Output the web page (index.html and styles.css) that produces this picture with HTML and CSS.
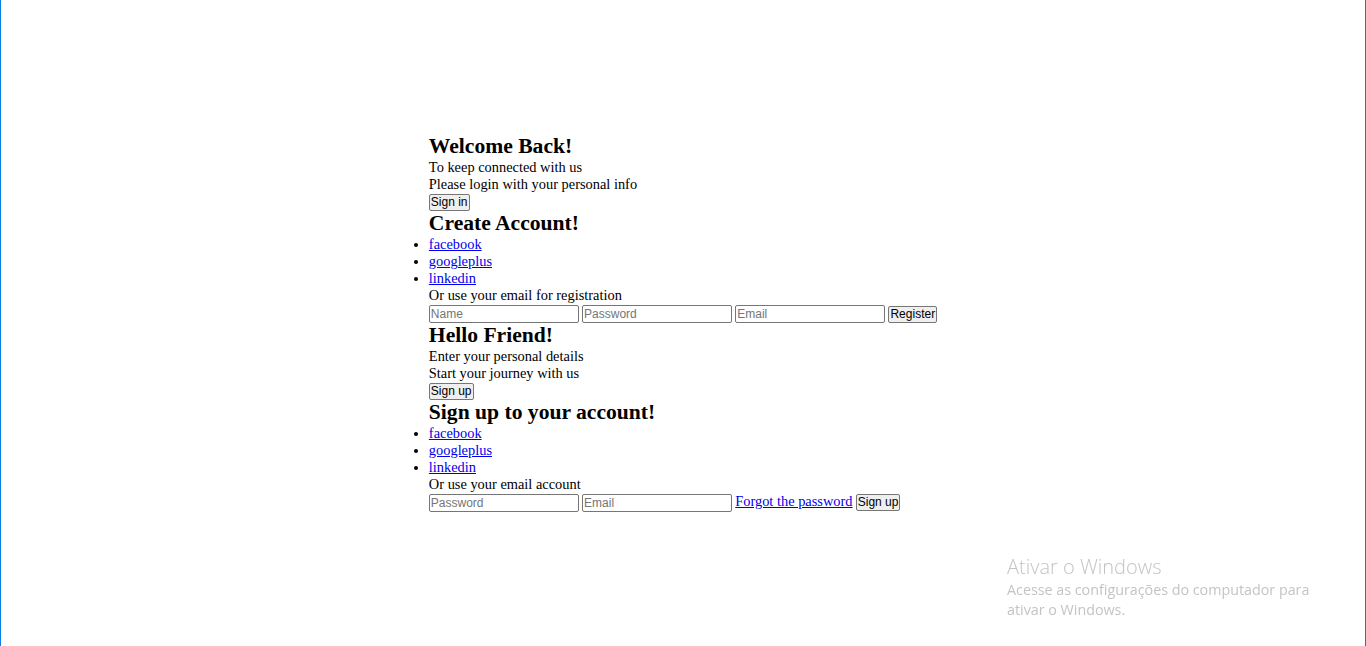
FILE: index.html
```html
<!DOCTYPE html>
<html lang="pt">
<head>
<meta charset="utf-8">
<title>Login</title>
<link rel="stylesheet" href="styles.css">
</head>
<body>
<div class="container">
  <div class="panel">
    <h2>Welcome Back!</h2>
    <p>To keep connected with us</p>
    <p>Please login with your personal info</p>
    <button>Sign in</button>
  </div>
  <div class="panel">
    <h2>Create Account!</h2>
    <ul>
      <li><a href="#">facebook</a></li>
      <li><a href="#">googleplus</a></li>
      <li><a href="#">linkedin</a></li>
    </ul>
    <p>Or use your email for registration</p>
    <form class="row">
      <input type="text" placeholder="Name">
      <input type="password" placeholder="Password">
      <input type="email" placeholder="Email">
      <button>Register</button>
    </form>
  </div>
  <div class="panel">
    <h2>Hello Friend!</h2>
    <p>Enter your personal details</p>
    <p>Start your journey with us</p>
    <button>Sign up</button>
  </div>
  <div class="panel">
    <h2>Sign up to your account!</h2>
    <ul>
      <li><a href="#">facebook</a></li>
      <li><a href="#">googleplus</a></li>
      <li><a href="#">linkedin</a></li>
    </ul>
    <p>Or use your email account</p>
    <form class="row">
      <input type="password" placeholder="Password">
      <input type="email" placeholder="Email">
      <a href="#">Forgot the password</a>
      <button>Sign up</button>
    </form>
  </div>
</div>
<div class="watermark">
  <div class="wm-title">Ativar o Windows</div>
  <div class="wm-text">Acesse as configurações do computador para<br>ativar o Windows.</div>
</div>
</body>
</html>
```

FILE: styles.css
```css
* {
  margin: 0;
  padding: 0;
}

html {
  border-left: 1px solid #0a80e6;
  border-right: 1px solid #1a74d2;
}

body {
  box-sizing: border-box;
  height: 100vh;
  display: flex;
  justify-content: center;
  align-items: center;
  font-family: "Liberation Serif", "Times New Roman", serif;
  font-size: 14.4px;
  line-height: 17px;
}

h2 {
  font-size: 21.6px;
  line-height: 25px;
}

.row {
  word-spacing: -0.4px;
}

input {
  box-sizing: border-box;
  width: 150px;
  height: 18px;
  padding: 0 1px;
  border: 1px solid #767676;
  border-radius: 2px;
  font-family: "Liberation Sans", Arial, sans-serif;
  font-size: 12px;
  word-spacing: normal;
  vertical-align: middle;
}

input::placeholder {
  color: #757575;
}

button {
  box-sizing: border-box;
  height: 17px;
  padding: 0 1px;
  border: 1px solid #767676;
  border-radius: 2px;
  background: #efefef;
  color: #000;
  font-family: "Liberation Sans", Arial, sans-serif;
  font-size: 12px;
  line-height: 15px;
  word-spacing: normal;
  vertical-align: middle;
}

.row a {
  word-spacing: normal;
}

a {
  color: #0000ee;
}

.watermark {
  position: fixed;
  left: 1007px;
  top: 553px;
  color: #c4c4c4;
  font-family: "Open Sans", "Noto Sans", sans-serif;
}

.wm-title {
  font-size: 20px;
  font-weight: 300;
  line-height: 27px;
}

.wm-text {
  font-size: 14.3px;
  line-height: 20px;
}
```
